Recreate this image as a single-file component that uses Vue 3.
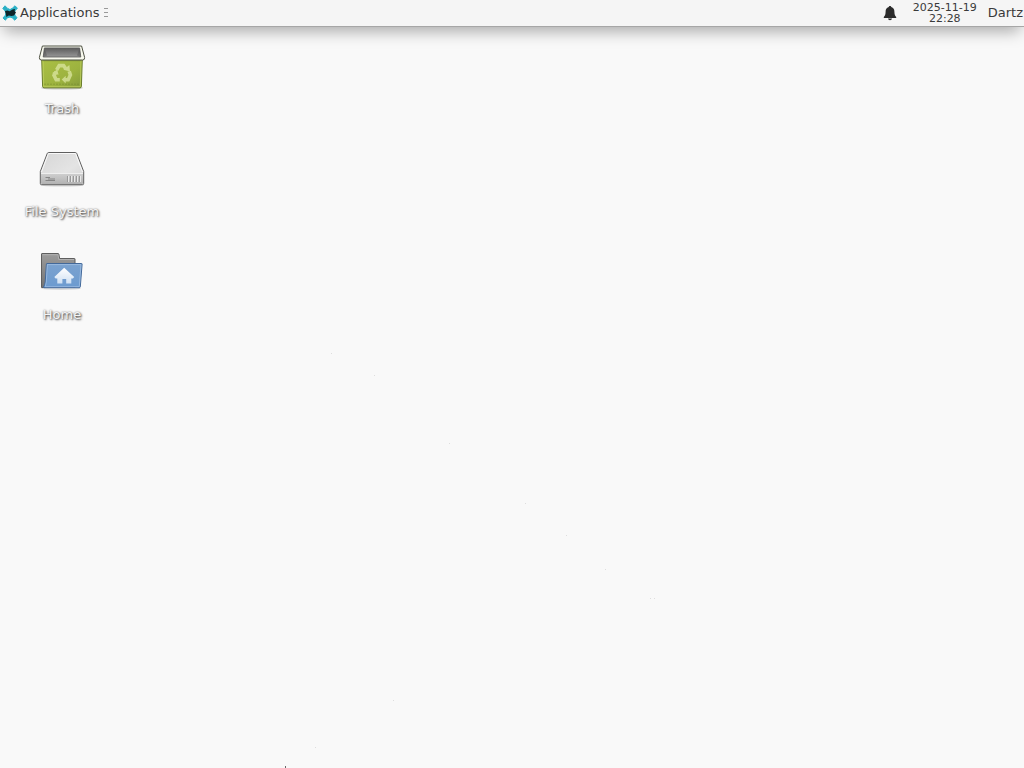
<template>
  <div class="desktop">
    <svg class="wallpaper" viewBox="0 0 1024 768" aria-hidden="true">
      <rect
        v-for="(speck, i) in specks"
        :key="i"
        :x="speck[0]"
        :y="speck[1]"
        :width="speck[2]"
        height="1"
        fill="#dedede"
      />
      <path d="M285 766H286V768H285Z" fill="#666" />
    </svg>

    <header class="panel">
      <button type="button" class="panel__menu">
        <svg class="panel__logo" viewBox="0 0 16 16" aria-hidden="true">
          <path
            d="M3 .8 5.6 3.4 8 4.6 10.4 3.2 13 .8 15.4 3.2 12.8 6 12.4 8.2 13 10.2 15 12.8 12.8 15.2 10.2 12.8 8 12 5.6 12.8 3.2 15.2 1 13 3.4 10.2 3.8 8.2 3.2 6 .8 3.4Z"
            fill="#2bb0c6"
            stroke="#2bb0c6"
            stroke-linejoin="round"
          />
          <path d="M3 6 5.4 5.6 7.6 6.2 10.6 4.6 13 4 12.6 6 14 7.4 12 10.4 9.4 11 6.8 10.6 4.4 12 4 9.5Z" fill="#0d2329" />
        </svg>
        <span>Applications</span>
      </button>
      <span class="panel__handle"><i></i><i></i><i></i></span>
      <div class="panel__right">
        <svg class="panel__bell" viewBox="0 0 14 16" aria-hidden="true">
          <path d="M7 1C6.2 1 5.8 1.5 5.7 2.1 3.5 2.7 2.6 4.6 2.6 6.8 2.6 9.7 2 10.8 .8 12V13H13.2V12C12 10.8 11.4 9.7 11.4 6.8 11.4 4.6 10.5 2.7 8.3 2.1 8.2 1.5 7.8 1 7 1ZM5 13.5H9C8.8 14.7 8 15.2 7 15.2S5.2 14.7 5 13.5Z" fill="#2b2b2b" />
        </svg>
        <div class="panel__clock">
          <span>{{ date }}</span>
          <span>{{ time }}</span>
        </div>
        <span class="panel__user">Dartz</span>
      </div>
    </header>

    <main class="icons">
      <div v-for="item in items" :key="item.id" class="icon">
        <svg v-if="item.id === 'trash'" class="icon__image" viewBox="0 0 48 48" aria-hidden="true">
          <defs>
            <linearGradient id="bin" x1="0" y1="0" x2="1" y2="1">
              <stop offset="0" stop-color="#abc044" />
              <stop offset="0.6" stop-color="#9db33f" />
              <stop offset="1" stop-color="#839a3c" />
            </linearGradient>
            <linearGradient id="hole" x1="0" y1="0" x2="0" y2="1">
              <stop offset="0" stop-color="#5c5c5c" />
              <stop offset="1" stop-color="#979797" />
            </linearGradient>
          </defs>
          <ellipse cx="24" cy="45" rx="21" ry="1.6" fill="#000" opacity="0.2" />
          <path d="M3.7 16H44.3L43.4 43.4Q43.3 44.8 42 44.8H6Q4.7 44.8 4.6 43.4Z" fill="url(#bin)" stroke="#6a7d2b" />
          <path d="M5 17H43L42.3 43.7H5.7Z" fill="none" stroke="#bfd060" stroke-width="0.8" />
          <path d="M4.8 17H43.2V18.2H4.8Z" fill="#5f751f" opacity="0.4" />
          <path d="M6 41.2H42" stroke="#74882f" stroke-dasharray="2 1" opacity="0.5" />
          <path d="M4.4 3H43.6L46.6 14.4Q46.8 17 44.8 17H3.2Q1.2 17 1.4 14.4Z" fill="#f8f9ee" stroke="#4f5244" />
          <path d="M6.4 4.9H41.6L42.8 14H5.2Z" fill="url(#hole)" stroke="#5a5a5a" stroke-width="0.8" />
          <path d="M6.4 4.9 9 12.6 5.2 14ZM41.6 4.9 39 12.6 42.8 14Z" fill="#444" opacity="0.35" />
          <g opacity="0.75">
            <g fill="none" stroke="#dce6a2" stroke-width="3.6">
              <path d="M18.6 27 21.2 22.6H25.6L28 26" />
              <path d="M31.2 28.2 32.4 32 30.2 36.8H26.5" />
              <path d="M21.8 36.8H18.2L16 32.4 18 29" />
            </g>
            <g fill="#dce6a2">
              <path d="M25.4 26.8 32 28.4 31.4 22Z" />
              <path d="M27.7 32.8V40.4L23.7 36.6Z" />
              <path d="M14 30.2 19.2 26.4 20.6 31.8Z" />
            </g>
          </g>
        </svg>

        <svg v-else-if="item.id === 'filesystem'" class="icon__image" viewBox="0 1 48 48" aria-hidden="true">
          <defs>
            <linearGradient id="drive-top" x1="0" y1="0" x2="1" y2="1">
              <stop offset="0" stop-color="#d6d6d6" />
              <stop offset="0.6" stop-color="#e4e4e4" />
              <stop offset="1" stop-color="#d2d2d2" />
            </linearGradient>
            <linearGradient id="drive-front" x1="0" y1="0" x2="0" y2="1">
              <stop offset="0" stop-color="#cfcfcf" />
              <stop offset="1" stop-color="#b2b2b2" />
            </linearGradient>
          </defs>
          <ellipse cx="24" cy="40" rx="22" ry="1.6" fill="#000" opacity="0.14" />
          <path d="M10.7 7.5H37.3Q38.4 7.5 38.8 8.6L45.7 26.5V38.4Q45.7 39.7 44.5 39.7H3.5Q2.3 39.7 2.3 38.4V26.5L9.2 8.6Q9.6 7.5 10.7 7.5Z" fill="url(#drive-top)" stroke="#5f5f5f" />
          <path d="M3 28.5H45V38Q45 39 44 39H4Q3 39 3 38Z" fill="url(#drive-front)" />
          <path d="M3.4 27.2 10.2 9.2Q10.4 8.5 11 8.5H37Q37.6 8.5 37.8 9.2L44.6 27.2" fill="none" stroke="#fff" opacity="0.8" />
          <path d="M3 28.5H45" stroke="#efefef" />
          <path d="M7.5 32.5H12M7.5 35.5H17M10 34H17" stroke="#858585" stroke-width="1.2" />
          <path d="M29.5 31V37M32.5 31V37M35.5 31V37M38.5 31V37M41.5 31V37" stroke="#999" />
          <path d="M30.5 31V37M33.5 31V37M36.5 31V37M39.5 31V37M42.5 31V37" stroke="#e8e8e8" />
        </svg>

        <svg v-else class="icon__image" viewBox="0 1 48 48" aria-hidden="true">
          <defs>
            <linearGradient id="folder-back" x1="0" y1="0" x2="0" y2="1">
              <stop offset="0" stop-color="#9c9c9c" />
              <stop offset="1" stop-color="#747474" />
            </linearGradient>
            <linearGradient id="folder-front" x1="0" y1="0" x2="0" y2="1">
              <stop offset="0" stop-color="#7ba2cf" />
              <stop offset="1" stop-color="#6c9bd0" />
            </linearGradient>
            <linearGradient id="house" x1="0" y1="0" x2="0" y2="1">
              <stop offset="0" stop-color="#fff" />
              <stop offset="1" stop-color="#cfe0f3" />
            </linearGradient>
          </defs>
          <ellipse cx="23" cy="40.6" rx="20" ry="1.4" fill="#000" opacity="0.12" />
          <path d="M3.5 39.5V6Q3.5 5.5 4 5.5H20.2Q20.7 5.5 20.9 6.2L21.6 10.5H36.4Q37 10.5 37 11V39.5Z" fill="url(#folder-back)" stroke="#5f5f5f" />
          <path d="M4.5 6.7H20L20.8 11.5H36" fill="none" stroke="#b8b8b8" opacity="0.8" />
          <path d="M9 15.5H43.6Q44.2 15.5 44.1 16.1L42.3 38.8Q42.2 39.7 41.2 39.7H6Q5.3 39.7 5.5 39Q6.8 36.8 7.2 34L8.4 16.1Q8.4 15.5 9 15.5Z" fill="url(#folder-front)" stroke="#43699a" />
          <path d="M9.3 16.6H43L41.3 38.7H7.3L8.3 34Z" fill="none" stroke="#b3cdec" stroke-width="0.8" opacity="0.7" />
          <path d="M26.2 19.8 16.3 29 17.6 30.4H19.3V35.6H24.4V31H28.2V35.6H33.3V30.4H34.9L36.2 29Z" fill="url(#house)" />
        </svg>
        <span class="icon__label">{{ item.label }}</span>
      </div>
    </main>
  </div>
</template>

<script setup>
const date = '2025-11-19'
const time = '22:28'

const items = [
  { id: 'trash', label: 'Trash' },
  { id: 'filesystem', label: 'File System' },
  { id: 'home', label: 'Home' },
]

// faint marks on the wallpaper: x, y, width
const specks = [
  [331, 353, 1],
  [374, 375, 1],
  [449, 443, 1],
  [525, 503, 1],
  [566, 535, 1],
  [605, 569, 1],
  [650, 598, 1],
  [654, 598, 1],
  [393, 700, 1],
  [315, 747, 1],
]
</script>

<style>
body {
  margin: 0;
  overflow: hidden;
}
</style>

<style scoped>
.desktop {
  position: relative;
  width: 100vw;
  height: 100vh;
  overflow: hidden;
  background: #f9f9f9;
  color: #3a3a3a;
  font-family: 'DejaVu Sans', sans-serif;
  font-size: 13px;
}

.wallpaper {
  position: absolute;
  inset: 0;
  width: 1024px;
  height: 768px;
  pointer-events: none;
}

.panel {
  position: relative;
  display: flex;
  align-items: center;
  box-sizing: border-box;
  height: 27px;
  padding: 0 1px 1px 2px;
  background: #f5f5f5;
  border-bottom: 1px solid #a6a6a6;
  box-shadow: 0 8px 16px -4px rgba(0, 0, 0, 0.34);
}

.panel__menu {
  display: flex;
  align-items: center;
  gap: 2px;
  padding: 0;
  border: none;
  background: transparent;
  color: inherit;
  font: inherit;
}

.panel__logo {
  width: 16px;
  height: 16px;
}

.panel__handle {
  display: flex;
  flex-direction: column;
  gap: 3px;
  margin-left: 5px;
}

.panel__handle i {
  width: 4px;
  height: 1px;
  background: #999;
}

.panel__right {
  display: flex;
  align-items: center;
  margin-left: auto;
}

.panel__bell {
  width: 14px;
  height: 16px;
  margin-right: 16px;
}

.panel__clock {
  display: flex;
  flex-direction: column;
  align-items: center;
  margin-right: 11px;
  font-size: 11px;
  line-height: 11px;
}

.icons {
  position: relative;
  display: flex;
  flex-direction: column;
  gap: 29px;
  width: 124px;
  padding-top: 16px;
}

.icon {
  display: flex;
  flex-direction: column;
  align-items: center;
  height: 74px;
}

.icon__image {
  flex: none;
  width: 48px;
  height: 48px;
}

.icon__label {
  margin-top: 10px;
  color: #f4f4f4;
  line-height: 16px;
  text-shadow: 1px 1px 2px rgba(0, 0, 0, 0.7), 0 0 2px rgba(0, 0, 0, 0.45);
}
</style>
